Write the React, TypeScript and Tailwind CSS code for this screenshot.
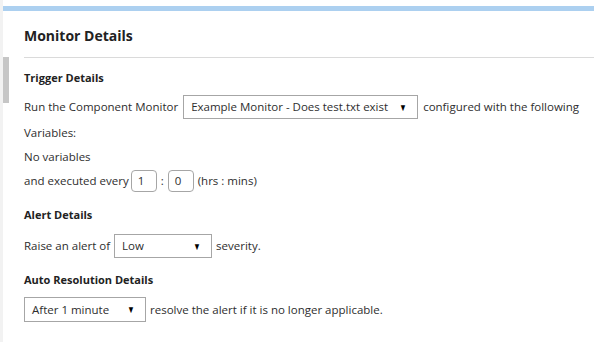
import React from "react";

const font = { fontFamily: '"Open Sans", "Noto Sans", sans-serif' };

const Select = ({ value, className }: { value: string; className: string }) => (
  <div
    className={`flex items-center justify-between border border-[#a6a6a6] bg-white pl-[7px] pr-[9px] h-[24px] ${className}`}
  >
    <span>{value}</span>
    <span className="text-[10px] text-black scale-x-75">▼</span>
  </div>
);

const NumBox = ({ value }: { value: string }) => (
  <div className="flex items-center border border-[#a6a6a6] rounded-[4px] h-[22px] w-[26px] pl-[6px]">
    {value}
  </div>
);

export default function App() {
  return (
    <div className="w-[594px] h-[342px] bg-white flex text-[11.5px] text-[#2e2e2e]" style={font}>
      {/* left gutter with scroll thumb */}
      <div className="w-[3px] bg-[#f2f2f2]" />
      <div className="flex-1 flex flex-col">
        <div className="h-[6px]" />
        <div className="h-[5px] bg-[#acd0f0]" />
        <div className="flex flex-1">
          <div className="w-[6px] pt-[46px]">
            <div className="h-[46px] bg-[#c6c6c6]" />
          </div>
          <div className="flex-1 flex flex-col pl-[15px]">
            <div className="h-[47px] flex items-center border-b border-[#dadada] pt-[3px]">
              <h2 className="text-[14px] font-bold text-[#222]">Monitor Details</h2>
            </div>

            <div className="text-[11px] font-bold mt-[11px] h-[18px] flex items-center text-[#222]">Trigger Details</div>

            <div className="flex items-center gap-[5px] mt-[8px]">
              <span>Run the Component Monitor</span>
              <Select value="Example Monitor - Does test.txt exist" className="w-[235px]" />
              <span>configured with the following</span>
            </div>
            <div className="mt-[4px] h-[20px] flex items-center">Variables:</div>
            <div className="mt-[4px] h-[20px] flex items-center">No variables</div>
            <div className="flex items-center mt-[3px]">
              <span className="mr-[2px]">and executed every</span>
              <NumBox value="1" />
              <span className="mx-[4px]">:</span>
              <NumBox value="0" />
              <span className="ml-[4px]">(hrs : mins)</span>
            </div>

            <div className="text-[11px] font-bold mt-[14px] h-[18px] flex items-center text-[#222]">Alert Details</div>
            <div className="flex items-center gap-[4px] mt-[10px]">
              <span>Raise an alert of</span>
              <Select value="Low" className="w-[98px]" />
              <span>severity.</span>
            </div>

            <div className="text-[11px] font-bold mt-[13px] h-[18px] flex items-center text-[#222]">Auto Resolution Details</div>
            <div className="flex items-center gap-[4px] mt-[8px]">
              <Select value="After 1 minute" className="w-[122px] h-[25px]" />
              <span>resolve the alert if it is no longer applicable.</span>
            </div>
          </div>
        </div>
      </div>
    </div>
  );
}
